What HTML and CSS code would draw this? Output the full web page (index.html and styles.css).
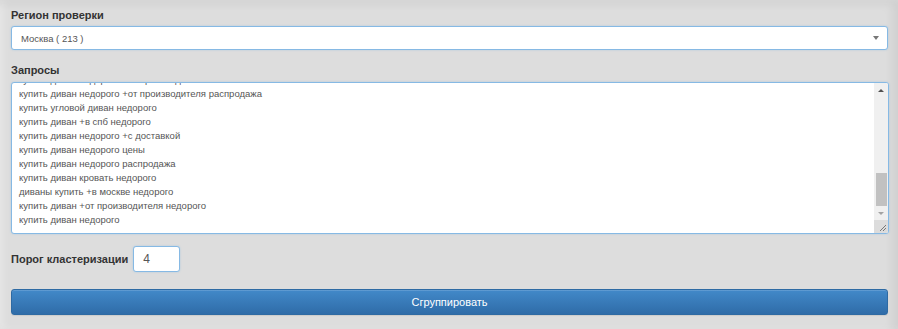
FILE: index.html
```html
<!DOCTYPE html>
<html lang="ru">
<head>
    <meta charset="UTF-8">
    <meta name="viewport" content="width=device-width, initial-scale=1.0">
    <title>Кластеризация запросов</title>
    <link rel="stylesheet" href="styles.css">
</head>
<body>

    <!-- Форма группировки -->
    <div class="panel">
        <label class="field-label" for="region">Регион проверки</label>
        <div class="select-wrap">
            <select id="region" class="field select">
                <option>Москва ( 213 )</option>
                <option>Санкт-Петербург ( 2 )</option>
            </select>
        </div>

        <label class="field-label" for="queries">Запросы</label>
        <div class="field queries-box">
            <textarea id="queries" class="queries">купить диван
диван купить недорого
купить диван +в москве
диваны недорого
купить диван кровать
купить угловой диван
диван недорого +от производителя
купить диван +от производителя
купить диван +в интернет магазине
диваны купить +в москве
купить диван недорого +в москве
диван кровать недорого
купить диван +с доставкой
угловой диван недорого
купить диван распродажа
купить диван цены
диваны недорого москва
купить недорогой диван
купить диван недорого +в интернет магазине
диван купить дешево
купить диван книжку недорого
купить прямой диван недорого
купить диван еврокнижку недорого
диван недорого +с доставкой
купить диван недорого москва
купить диван недорого +от производителя +в москве
купить диван недорого +от производителя распродажа
купить угловой диван недорого
купить диван +в спб недорого
купить диван недорого +с доставкой
купить диван недорого цены
купить диван недорого распродажа
купить диван кровать недорого
диваны купить +в москве недорого
купить диван +от производителя недорого
купить диван недорого</textarea>
            <!-- Полоса прокрутки в стиле Windows -->
            <div class="scrollbar">
                <div class="sb-btn sb-up"></div>
                <div class="sb-track"><div class="sb-thumb"></div></div>
                <div class="sb-btn sb-down"></div>
                <div class="sb-corner">
                    <svg width="9" height="9" viewBox="0 0 9 9">
                        <path d="M8 2 L2 8 M8 5 L5 8" stroke="#777" stroke-width="1" fill="none"/>
                    </svg>
                </div>
            </div>
        </div>

        <div class="threshold">
            <label class="field-label inline" for="threshold">Порог кластеризации</label>
            <input type="text" id="threshold" class="field threshold-input" value="4">
        </div>

        <button class="btn-group">Сгруппировать</button>
    </div>

    <script>
        // Список прокручен к концу, как после вставки
        let queries = document.getElementById("queries");
        queries.scrollTop = queries.scrollHeight;
    </script>

</body>
</html>
```

FILE: styles.css
```css
/* Global Reset */
* {
    margin: 0;
    padding: 0;
    box-sizing: border-box;
}

body {
    font-family: 'Liberation Sans', Arial, sans-serif;
    background-color: #dcdcdc;
    color: #333;
    width: 898px;
    height: 329px;
    overflow: hidden;
}

/* Panel */
.panel {
    height: 329px;
    padding: 7px 11px 0 11px;
    background: #dddddd;
    box-shadow: inset -6px 4px 8px rgba(0, 0, 0, 0.06), inset 4px 0 6px rgba(255, 255, 255, 0.25);
    display: flex;
    flex-direction: column;
}

.field-label {
    display: block;
    font-size: 11px;
    font-weight: bold;
    line-height: 16px;
    color: #333;
    margin-bottom: 3px;
}

.field-label.inline {
    display: inline-block;
    margin: 0 5px 0 0;
}

/* Inputs */
.field {
    font-family: 'Liberation Sans', Arial, sans-serif;
    font-size: 9.5px;
    color: #555;
    background: #fff;
    border: 1px solid #86b9e4;
    border-radius: 3px;
    outline: none;
    box-shadow: 0 0 2px rgba(102, 175, 233, 0.4);
}

.select-wrap {
    position: relative;
    width: 877px;
    margin-bottom: 12px;
}

.select {
    display: block;
    width: 100%;
    height: 24px;
    padding: 0 9px;
    appearance: none;
    -webkit-appearance: none;
}

.select-wrap::after {
    content: "";
    position: absolute;
    right: 9px;
    top: 10px;
    border-left: 3px solid transparent;
    border-right: 3px solid transparent;
    border-top: 4px solid #777;
    pointer-events: none;
}

/* Textarea with scrollbar */
.queries-box {
    display: flex;
    width: 878px;
    height: 152px;
    margin-top: 1px;
    overflow: hidden;
}

.queries {
    flex: 1;
    height: 100%;
    padding: 4px 7px 6px 7px;
    border: none;
    outline: none;
    resize: none;
    overflow: hidden;
    font-family: 'Liberation Sans', Arial, sans-serif;
    font-size: 9.5px;
    line-height: 14px;
    color: #555;
    background: transparent;
}

.scrollbar {
    width: 14px;
    display: flex;
    flex-direction: column;
    background: #f0f0f0;
}

.sb-btn {
    height: 14px;
    display: flex;
    align-items: center;
    justify-content: center;
}

.sb-btn::before {
    content: "";
    border-left: 3px solid transparent;
    border-right: 3px solid transparent;
}

.sb-up::before { border-bottom: 3px solid #505050; }
.sb-down { height: 13px; }
.sb-down::before { border-top: 3px solid #a3a3a3; }

.sb-track {
    flex: 1;
    display: flex;
    flex-direction: column;
    justify-content: flex-end;
    padding: 0 1px 1px 2px;
}

.sb-thumb {
    height: 33px;
    background: #c1c1c1;
}

.sb-corner {
    height: 13px;
    background: #dcdcdc;
    display: flex;
    align-items: flex-end;
    justify-content: flex-end;
    padding: 0 1px 1px 0;
}

/* Threshold row */
.threshold {
    display: flex;
    align-items: center;
    margin-top: 12px;
    height: 26px;
}

.threshold-input {
    width: 47px;
    height: 26px;
    padding: 0 9px;
    font-size: 12px;
    color: #555;
}

/* Main Button */
.btn-group {
    width: 877px;
    height: 26px;
    margin-top: 17px;
    font-family: 'Liberation Sans', Arial, sans-serif;
    font-size: 11px;
    color: #fff;
    border: 1px solid #2e6aa3;
    border-radius: 3px;
    cursor: pointer;
    background: linear-gradient(to bottom, #4289c9 0%, #2f6ca8 100%);
    box-shadow: inset 0 1px 0 rgba(255, 255, 255, 0.15), 0 1px 1px rgba(0, 0, 0, 0.08);
}

.btn-group:hover {
    background: #2f6ca8;
}
```
